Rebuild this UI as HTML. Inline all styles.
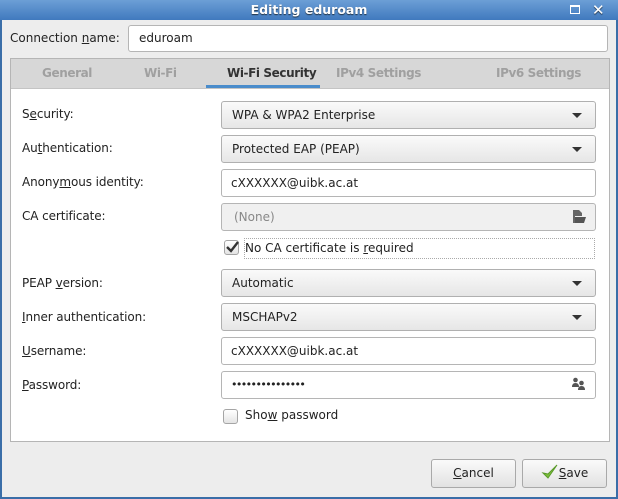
<!DOCTYPE html><html><head><style>
*{box-sizing:border-box;margin:0;padding:0}
body{width:618px;height:499px;position:relative;overflow:hidden;background:#3a6ea8;font-family:"DejaVu Sans","Liberation Sans",sans-serif;font-size:12px;color:#222}
.a{position:absolute}
#win{left:2px;top:20px;width:614px;height:477px;background:#ededed}
#title{left:0;top:0;width:618px;height:20px;background:linear-gradient(#6c9fd6,#4079be);color:#fff;font-weight:bold;font-size:12.5px;text-align:center;line-height:20px;text-shadow:0 1px 1px #234}
.lab{left:22px;font-size:12px;letter-spacing:-0.1px}
.fld{left:221px;width:375px;height:28px;border:1px solid #b5b5b5;border-radius:3px;background:#fff;padding-left:9px;line-height:26px}
.cb{background:linear-gradient(#fafafa,#e6e6e6);border-color:#b0b0b0;padding-left:10px}
.cb:after{content:"";position:absolute;right:13px;top:11px;border-left:5px solid transparent;border-right:5px solid transparent;border-top:5px solid #333}
u{text-decoration:underline}
.tab{top:66px;font-weight:bold;color:#a0a0a0;font-size:12px;letter-spacing:-0.4px}
.btn{top:459px;width:85px;height:29px;border:1px solid #a9a9a9;border-radius:3px;background:linear-gradient(#fafafa,#e2e2e2);text-align:center;line-height:27px}
.chk{width:15px;height:15px;border:1px solid #a5a5a5;border-radius:3px;background:linear-gradient(#fff,#e4e4e4)}
</style></head><body>
<div id="title" class="a">Editing eduroam
<div class="a" style="left:570px;top:5px;width:10px;height:9px;border:1px solid #fff;border-top-width:2px"></div>
<div class="a" style="left:592px;top:0;font-size:15px">✕</div>
</div>
<div id="win" class="a"></div>
<div class="a" style="left:10px;top:31px">Connection <u>n</u>ame:</div>
<div class="a fld" style="left:128px;top:25px;width:480px;height:27px;padding-left:10px;line-height:25px">eduroam</div>
<div class="a" style="left:10px;top:58px;width:600px;height:384px;border:1px solid #b5b5b5;background:#fff"></div>
<div class="a" style="left:11px;top:59px;width:598px;height:30px;background:#d7d7d7;border-bottom:1px solid #c4c4c4"></div>
<div class="a tab" style="left:42px">General</div>
<div class="a tab" style="left:144px">Wi-Fi</div>
<div class="a tab" style="left:227px;color:#333">Wi-Fi Security</div>
<div class="a" style="left:206px;top:85px;width:114px;height:3px;background:#4a8ccb"></div>
<div class="a tab" style="left:336px">IPv4 Settings</div>
<div class="a tab" style="left:496px">IPv6 Settings</div>

<div class="a lab" style="top:107px">S<u>e</u>curity:</div>
<div class="a fld cb" style="top:101px">WPA &amp; WPA2 Enterprise</div>
<div class="a lab" style="top:141px">Au<u>t</u>hentication:</div>
<div class="a fld cb" style="top:135px">Protected EAP (PEAP)</div>
<div class="a lab" style="top:175px">Anony<u>m</u>ous identity:</div>
<div class="a fld" style="top:169px">cXXXXXX@uibk.ac.at</div>
<div class="a lab" style="top:209px">CA certificate:</div>
<div class="a fld" style="top:203px;background:#f0f0f0;color:#888;padding-left:12px">(None)</div>
<svg class="a" style="left:571px;top:209px" width="16" height="15"><path d="M2 1h6l3 3v3h-7v7h-2z" fill="#666"/><path d="M4 8h11l-2 6h-9z" fill="#555"/></svg>
<div class="a chk" style="left:224px;top:240px"></div>
<svg class="a" style="left:225px;top:240px" width="15" height="14"><path d="M2 7l4 4 7-9" stroke="#333" stroke-width="2.4" fill="none"/></svg>
<div class="a" style="left:244px;top:238px;width:351px;height:21px;border:1px dotted #aaa;padding-left:0;line-height:19px">No CA certificate is <u>r</u>equired</div>
<div class="a lab" style="top:276px">PEAP <u>v</u>ersion:</div>
<div class="a fld cb" style="top:269px">Automatic</div>
<div class="a lab" style="top:310px"><u>I</u>nner authentication:</div>
<div class="a fld cb" style="top:303px">MSCHAPv2</div>
<div class="a lab" style="top:344px"><u>U</u>sername:</div>
<div class="a fld" style="top:337px">cXXXXXX@uibk.ac.at</div>
<div class="a lab" style="top:378px"><u>P</u>assword:</div>
<div class="a fld" style="top:371px;letter-spacing:-1.6px;font-size:11px">•••••••••••••••</div>
<svg class="a" style="left:571px;top:377px" width="15" height="14"><circle cx="4.5" cy="3" r="2.3" fill="#555"/><path d="M1 10q0-4 3.5-4t3.5 4z" fill="#555"/><circle cx="10.5" cy="6" r="2.3" fill="#555"/><path d="M7 13q0-4 3.5-4t3.5 4z" fill="#555"/></svg>
<div class="a chk" style="left:223px;top:409px"></div>
<div class="a" style="left:245px;top:408px">Sho<u>w</u> password</div>
<div class="a btn" style="left:431px"><u>C</u>ancel</div>
<div class="a btn" style="left:522px"><svg width="18" height="16" style="vertical-align:-3px"><path d="M2 9l5 5 9-13-9 9z" fill="#7cbf3a" stroke="#5a9a2a" stroke-width="1"/></svg><u>S</u>ave</div>
</body></html>
